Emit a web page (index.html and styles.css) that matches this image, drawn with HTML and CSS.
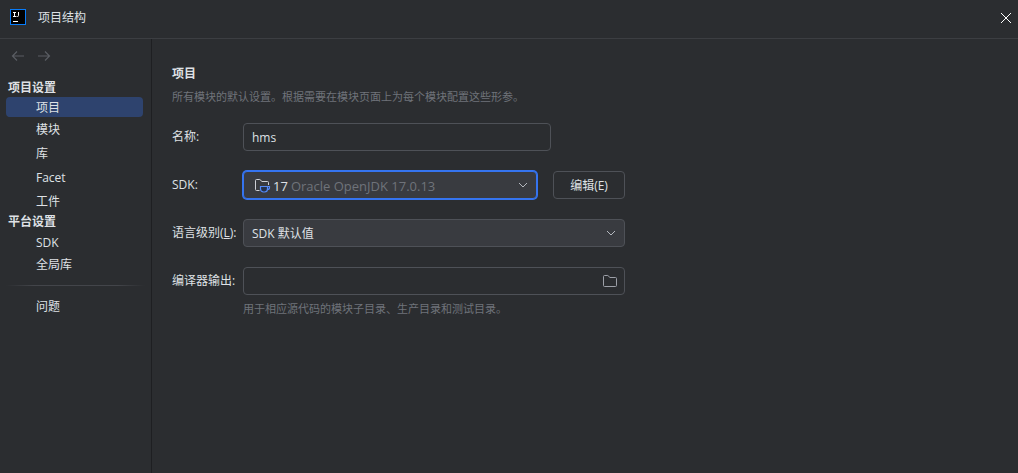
FILE: index.html
```html
<!DOCTYPE html>
<html lang="zh-CN">
<head>
    <meta charset="UTF-8">
    <meta name="viewport" content="width=device-width, initial-scale=1.0">
    <title>项目结构</title>
    <link rel="stylesheet" href="styles.css">
</head>
<body>
    <header class="titlebar">
        <svg class="app-logo" width="16" height="16" viewBox="0 0 16 16">
            <rect x="0.5" y="0.5" width="15" height="15" fill="#000" stroke="#087cfa"/>
            <path d="M3 3.5h3M4.5 3.5v4M3 7.5h3M8.5 3v3.5q0 1-1 1H6.500" fill="none" stroke="#fff"/>
            <path d="M3 12.5h5" stroke="#fff"/>
        </svg>
        <h1 class="window-title">项目结构</h1>
        <button class="close-button" type="button" aria-label="关闭">
            <svg width="12" height="12" viewBox="0 0 12 12">
                <path d="M1 1l10 10M11 1L1 11" fill="none" stroke="#fff"/>
            </svg>
        </button>
    </header>

    <div class="content">
        <aside class="sidebar">
            <div class="history">
                <button type="button" aria-label="后退" disabled>
                    <svg width="14" height="12" viewBox="0 0 14 12"><path d="M13 6H1.5M6 1.5L1.5 6 6 10.5"/></svg>
                </button>
                <button type="button" aria-label="前进" disabled>
                    <svg width="14" height="12" viewBox="0 0 14 12"><path d="M1 6h11.5M8 1.5L12.5 6 8 10.5"/></svg>
                </button>
            </div>
            <nav>
                <h2 class="nav-heading">项目设置</h2>
                <ul class="nav-list">
                    <li><a class="selected" href="#project">项目</a></li>
                    <li><a href="#modules">模块</a></li>
                    <li><a href="#libraries">库</a></li>
                    <li><a href="#facets">Facet</a></li>
                    <li><a href="#artifacts">工件</a></li>
                </ul>
                <h2 class="nav-heading">平台设置</h2>
                <ul class="nav-list compact">
                    <li><a href="#sdks">SDK</a></li>
                    <li><a href="#global-libraries">全局库</a></li>
                </ul>
                <hr class="separator">
                <ul class="nav-list compact">
                    <li><a href="#problems">问题</a></li>
                </ul>
            </nav>
        </aside>

        <main class="page">
            <h2 class="page-title">项目</h2>
            <p class="hint">所有模块的默认设置。根据需要在模块页面上为每个模块配置这些形参。</p>

            <form class="form">
                <label for="name">名称:</label>
                <input class="field name-field" id="name" type="text" value="hms">

                <label for="sdk">SDK:</label>
                <div class="sdk-row">
                    <div class="field combo focused">
                        <svg class="sdk-icon" width="17" height="16" viewBox="0 0 17 16">
                            <path d="M5.500 13.500H2.500a1 1 0 0 1-1-1v-9a1 1 0 0 1 1-1h3.300L8 4.500h5.500a1 1 0 0 1 1 1V8" fill="none" stroke="#ced0d6"/>
                            <path d="M6.500 9.500h7v2.500a3 3 0 0 1-3 3h-1a3 3 0 0 1-3-3zM13.500 9.500h2v1a2 2 0 0 1-2 2" fill="#25324d" stroke="#548af7" stroke-width="1.200"/>
                        </svg>
                        <span class="sdk-version">17</span>
                        <select class="sdk-select" id="sdk">
                            <option>Oracle OpenJDK 17.0.13</option>
                        </select>
                        <svg class="chevron" width="10" height="6" viewBox="0 0 10 6"><path d="M1 1l4 4 4-4"/></svg>
                    </div>
                    <button class="edit-button" type="button">编辑(E)</button>
                </div>

                <label for="level">语言级别(<u>L</u>):</label>
                <div class="field combo">
                    <select id="level">
                        <option>SDK 默认值</option>
                    </select>
                    <svg class="chevron" width="10" height="6" viewBox="0 0 10 6"><path d="M1 1l4 4 4-4"/></svg>
                </div>

                <label for="output">编译器输出:</label>
                <div class="field browse">
                    <input id="output" type="text">
                    <button type="button" aria-label="浏览">
                        <svg width="16" height="16" viewBox="0 0 16 16">
                            <path d="M1.5 3.5a1 1 0 0 1 1-1h3.3L8 4.5h5.5a1 1 0 0 1 1 1v7a1 1 0 0 1-1 1h-11a1 1 0 0 1-1-1z" fill="none" stroke="#9da0a8"/>
                        </svg>
                    </button>
                </div>
            </form>
            <p class="hint output-hint">用于相应源代码的模块子目录、生产目录和测试目录。</p>
        </main>
    </div>
</body>
</html>
```
FILE: styles.css
```css
* {
    box-sizing: border-box;
}
body {
    margin: 0;
    min-height: 100vh;
    display: flex;
    flex-direction: column;
    background-color: #2b2d30;
    color: #dfe1e5;
    font-family: "Open Sans", "Noto Sans CJK SC", sans-serif;
    font-size: 12px;
    line-height: 20px;
}
h1, h2, p, ul {
    margin: 0;
    padding: 0;
}
button, input, select {
    margin: 0;
    padding: 0;
    border: none;
    outline: none;
    background: none;
    color: inherit;
    font: inherit;
}
svg {
    display: block;
    flex: none;
}

/* title bar */
.titlebar {
    display: flex;
    align-items: center;
    gap: 12px;
    height: 39px;
    padding: 0 6px 4px 10px;
    border-bottom: 1px solid #3c3e42;
}
.window-title {
    flex: 1;
    padding-top: 2px;
    font-size: 12px;
    font-weight: normal;
}
.close-button {
    padding-top: 2px;
}

/* sidebar */
.content {
    flex: 1;
    display: flex;
}
.sidebar {
    flex: none;
    width: 152px;
    border-right: 1px solid #1e1f22;
}
.history {
    display: flex;
    gap: 12px;
    padding: 11px 11px 10px;
}
.history path {
    fill: none;
    stroke: #5a5d63;
    stroke-width: 1.2;
}
.nav-heading {
    padding-left: 8px;
    font-size: 12px;
    font-weight: bold;
    line-height: 18px;
}
.history + nav {
    padding-top: 7px;
}
.nav-list {
    list-style-type: none;
    padding: 0 8px 0 6px;
}
.nav-list a {
    display: block;
    padding: 2px 0 0 30px;
    border-radius: 4px;
    color: inherit;
    line-height: 22px;
    text-decoration: none;
}
.nav-list.compact a {
    line-height: 20px;
}
.nav-list .selected {
    background-color: #2e436e;
    line-height: 18px;
}
.separator {
    height: 1px;
    margin: 10px 6px 9px;
    border: none;
    background: linear-gradient(to right, transparent, #43454a 20%, #43454a 80%, transparent);
}

/* project page */
.page {
    flex: 1;
    padding: 25px 20px;
}
.page-title {
    font-size: 12px;
    font-weight: bold;
}
.hint {
    padding-top: 3px;
    color: #6f737a;
    font-size: 11px;
}
.form {
    display: grid;
    grid-template-columns: 71px 1fr;
    row-gap: 20px;
    align-items: center;
    max-width: 453px;
    padding-top: 16px;
}
.form label {
    white-space: nowrap;
}
.field {
    height: 28px;
    border: 1px solid #4e5157;
    border-radius: 4px;
}
.name-field {
    width: 308px;
    padding: 0 8px;
}
.combo {
    display: flex;
    align-items: center;
    padding: 0 8px;
    background-color: #393b40;
}
.combo select {
    flex: 1;
    min-width: 0;
    height: 26px;
    padding-top: 2px;
    appearance: none;
}
.combo option {
    background-color: #2b2d30;
}
.focused {
    flex: 1;
    border-color: #3574f0;
    box-shadow: 0 0 0 1px #3574f0;
}
.sdk-row {
    display: flex;
    gap: 16px;
}
.sdk-icon {
    margin: 0 2px;
}
.sdk-version {
    padding-top: 2px;
    margin-right: 3px;
    font-size: 13px;
}
.combo .sdk-select {
    color: #6f737a;
    font-size: 13px;
}
.chevron path {
    fill: none;
    stroke: #b4b8bf;
}
.edit-button {
    width: 72px;
    padding-top: 2px;
    border: 1px solid #4e5157;
    border-radius: 4px;
}
.browse {
    display: flex;
    align-items: center;
    padding: 0 6px 0 8px;
}
.browse input {
    flex: 1;
    min-width: 0;
}
.output-hint {
    padding: 4px 0 0 71px;
}
```
